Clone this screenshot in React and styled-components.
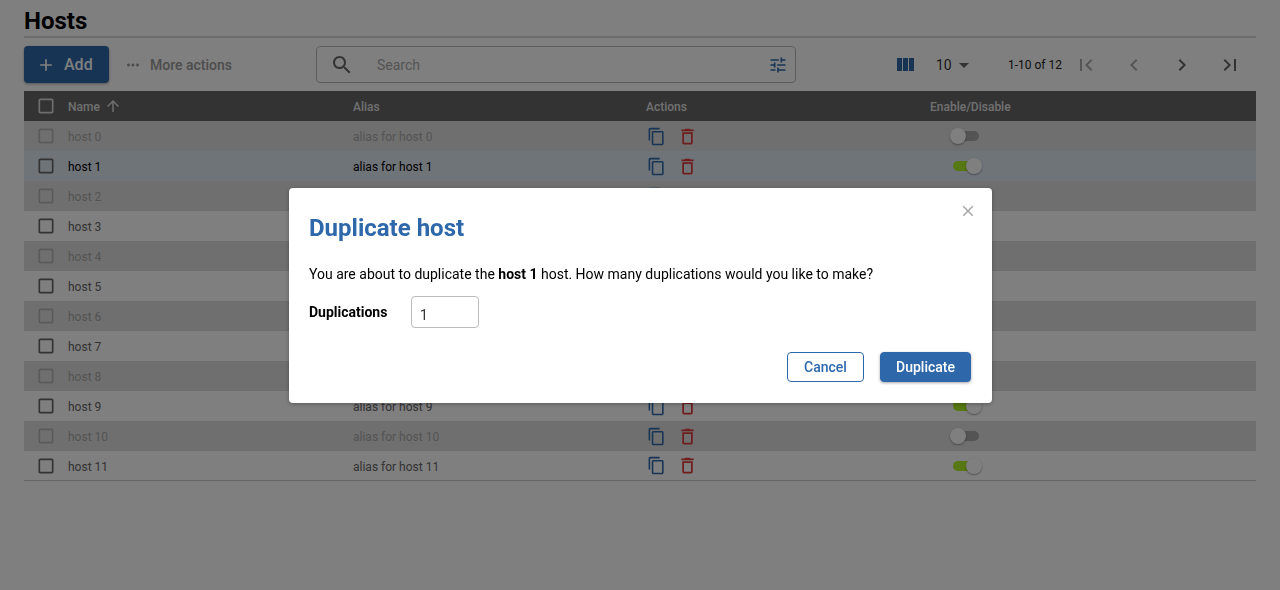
import React from "react";
import styled, { createGlobalStyle } from "styled-components";

const Global = createGlobalStyle`
  * { box-sizing: border-box; }
  html, body { margin: 0; padding: 0; height: 100%; background: #fff; font-family: Roboto, "Liberation Sans", sans-serif; color: #000; }
`;

const P = {
  copy: "M16 1H4c-1.1 0-2 .9-2 2v14h2V3h12V1zm3 4H8c-1.1 0-2 .9-2 2v14c0 1.1.9 2 2 2h11c1.1 0 2-.9 2-2V7c0-1.1-.9-2-2-2zm0 16H8V7h11v14z",
  del: "M6 19c0 1.1.9 2 2 2h8c1.1 0 2-.9 2-2V7H6v12zM8 9h8v10H8V9zm7.5-5l-1-1h-5l-1 1H5v2h14V4z",
  search: "M15.5 14h-.79l-.28-.27C15.41 12.59 16 11.11 16 9.5 16 5.91 13.09 3 9.5 3S3 5.91 3 9.5 5.91 16 9.5 16c1.61 0 3.09-.59 4.23-1.57l.27.28v.79l5 4.99L20.49 19l-4.99-5zm-6 0C7.01 14 5 11.99 5 9.5S7.01 5 9.5 5 14 7.01 14 9.5 11.99 14 9.5 14z",
  tune: "M3 17v2h6v-2H3zM3 5v2h10V5H3zm10 16v-2h8v-2h-8v-2h-2v6h2zM7 9v2H3v2h4v2h2V9H7zm14 4v-2H11v2h10zm-6-4h2V7h4V5h-4V3h-2v6z",
  columns: "M10 18h5V5h-5v13zm-6 0h5V5H4v13zM16 5v13h5V5h-5z",
  up: "M4 12l1.41 1.41L11 7.83V20h2V7.83l5.58 5.59L20 12l-8-8-8 8z",
  add: "M19 13h-6v6h-2v-6H5v-2h6V5h2v6h6v2z",
  more: "M6 10c-1.1 0-2 .9-2 2s.9 2 2 2 2-.9 2-2-.9-2-2-2zm12 0c-1.1 0-2 .9-2 2s.9 2 2 2 2-.9 2-2-.9-2-2-2zm-6 0c-1.1 0-2 .9-2 2s.9 2 2 2 2-.9 2-2-.9-2-2-2z",
  first: "M18.41 16.59L13.82 12l4.59-4.59L17 6l-6 6 6 6zM6 6h2v12H6z",
  prev: "M15.41 7.41L14 6l-6 6 6 6 1.41-1.41L10.83 12z",
  next: "M10 6L8.59 7.41 13.17 12l-4.58 4.59L10 18l6-6z",
  last: "M5.59 7.41L10.18 12l-4.59 4.59L7 18l6-6-6-6zM16 6h2v12h-2z",
  drop: "M7 10l5 5 5-5z",
  box: "M19 5v14H5V5h14m0-2H5c-1.1 0-2 .9-2 2v14c0 1.1.9 2 2 2h14c1.1 0 2-.9 2-2V5c0-1.1-.9-2-2-2z",
  close: "M19 6.41L17.59 5 12 10.59 6.41 5 5 6.41 10.59 12 5 17.59 6.41 19 12 13.41 17.59 19 19 17.59 13.41 12 19 6.41z",
};

const Icon = ({ d, size = 24, color = "currentColor" }) => (
  <svg width={size} height={size} viewBox="0 0 24 24" fill={color} style={{ display: "block", flex: "none" }}>
    <path d={d} />
  </svg>
);

const Page = styled.div`
  padding: 0 24px;
`;
const Title = styled.h1`
  margin: 0;
  height: 38px;
  padding-top: 8px;
  font-size: 24px;
  line-height: 26px;
  font-weight: 700;
  border-bottom: 2px solid #dadada;
`;
const Toolbar = styled.div`
  display: grid;
  grid-template-columns: 292px 480px 1fr;
  align-items: center;
  height: 37px;
  margin-top: 8px;
`;
const Actions = styled.div`
  display: flex;
  align-items: center;
`;
const AddButton = styled.div`
  display: flex;
  align-items: center;
  gap: 8px;
  width: 85px;
  height: 37px;
  padding-left: 12px;
  border-radius: 4px;
  background: #2e68ab;
  color: #fff;
  font-size: 16px;
  font-weight: 500;
  box-shadow: 0 1px 3px rgba(0, 0, 0, 0.35);
`;
const MoreButton = styled.div`
  display: flex;
  align-items: center;
  gap: 8px;
  margin-left: 15px;
  padding-top: 1px;
  color: #9a9a9a;
  font-size: 14px;
  font-weight: 500;
`;
const SearchBox = styled.div`
  display: flex;
  align-items: center;
  height: 37px;
  padding: 0 7px 0 13px;
  border: 1px solid #bbb;
  border-radius: 4px;
  color: #666;
`;
const SearchText = styled.span`
  flex: 1;
  margin-left: 23px;
  font-size: 14px;
  color: #a8a8a8;
`;
const Pager = styled.div`
  display: flex;
  align-items: center;
  padding-left: 97px;
  height: 37px;
`;
const PageSize = styled.div`
  display: flex;
  align-items: center;
  margin-left: 19px;
  width: 72px;
  font-size: 14px;
  color: #333;
`;
const Range = styled.span`
  width: 66px;
  font-size: 12px;
  color: #222;
`;
const PageButton = styled.div`
  width: 24px;
  margin-right: 24px;
  color: ${(p) => p.$color};
  &:last-child { margin-right: 0; }
`;
const Grid = styled.div`
  display: grid;
  grid-template-columns: 44px 285px 293px 284px 1fr;
  align-items: center;
  height: 30px;
  font-size: 12px;
`;
const Table = styled.div`
  margin-top: 8px;
`;
const Head = styled(Grid)`
  background: #666;
  color: #e0e0e0;
  font-weight: 500;
`;
const Row = styled(Grid)`
  background: ${(p) => (p.$hover ? "#dfe8f3" : p.$off ? "#dedede" : "#fff")};
  color: ${(p) => (p.$off ? "#a8a8a8" : p.$hover ? "#000" : "#666")};
  &:last-child { border-bottom: 1px solid #ccc; }
`;
const Cell = styled.div`
  padding-top: 2px;
`;
const Check = styled.div`
  padding-left: 12px;
  color: ${(p) => p.$color};
`;
const SortCell = styled.div`
  display: flex;
  align-items: center;
  gap: 4px;
`;
const RowActions = styled.div`
  display: flex;
  align-items: center;
  gap: 11px;
  margin-left: 1px;
`;
const Switch = styled.div`
  position: relative;
  width: 26px;
  height: 10px;
  margin-left: 23px;
  border-radius: 5px;
  background: ${(p) => (p.$on ? "#acee22" : "#a8a8a8")};
`;
const Thumb = styled.div`
  position: absolute;
  top: -3px;
  left: ${(p) => (p.$on ? "13px" : "-3px")};
  width: 16px;
  height: 16px;
  border-radius: 50%;
  background: #fff;
  box-shadow: 0 1px 2px rgba(0, 0, 0, 0.35);
`;
const Backdrop = styled.div`
  position: fixed;
  inset: 0;
  display: flex;
  align-items: center;
  justify-content: center;
  background: rgba(0, 0, 0, 0.5);
`;
const Modal = styled.div`
  position: relative;
  width: 703px;
  height: 215px;
  margin-left: 1px;
  padding: 24px 20px 0;
  border-radius: 4px;
  background: #fff;
  box-shadow: 0 1px 4px rgba(0, 0, 0, 0.3);
`;
const CloseButton = styled.div`
  position: absolute;
  top: 14px;
  right: 15px;
  color: #a5a5a5;
`;
const ModalTitle = styled.h2`
  margin: 0;
  font-size: 24px;
  line-height: 32px;
  font-weight: 700;
  color: #2e68ab;
`;
const Message = styled.p`
  margin: 20px 0 0;
  font-size: 14px;
  line-height: 20px;
  b { font-weight: 700; }
`;
const Field = styled.div`
  display: flex;
  align-items: center;
  margin-top: 12px;
`;
const FieldLabel = styled.label`
  width: 102px;
  font-size: 14px;
  font-weight: 700;
`;
const NumberBox = styled.div`
  width: 68px;
  height: 32px;
  padding: 10px 8px 0;
  border: 1px solid #bbb;
  border-radius: 4px;
  font-size: 14px;
  line-height: 17px;
  color: #333;
`;
const Buttons = styled.div`
  display: flex;
  justify-content: flex-end;
  gap: 16px;
  margin-top: 24px;
  margin-right: 1px;
`;
const ModalButton = styled.div`
  display: flex;
  align-items: center;
  justify-content: center;
  width: ${(p) => p.$w}px;
  height: 30px;
  border-radius: 4px;
  font-size: 14px;
  font-weight: 500;
  border: 1px solid #2e68ab;
  background: ${(p) => (p.$primary ? "#2e68ab" : "#fff")};
  color: ${(p) => (p.$primary ? "#fff" : "#2e68ab")};
  box-shadow: ${(p) => (p.$primary ? "0 1px 3px rgba(0,0,0,.35)" : "none")};
`;

const hosts = Array.from({ length: 12 }, (_, i) => i);

export default function App() {
  return (
    <>
      <Global />
      <Page>
        <Title>Hosts</Title>
        <Toolbar>
          <Actions>
            <AddButton><Icon d={P.add} size={20} /> Add</AddButton>
            <MoreButton><Icon d={P.more} size={18} color="#999" /> More actions</MoreButton>
          </Actions>
          <SearchBox>
            <Icon d={P.search} />
            <SearchText>Search</SearchText>
            <Icon d={P.tune} size={20} color="#2e68ab" />
          </SearchBox>
          <Pager>
            <Icon d={P.columns} color="#2e68ab" />
            <PageSize>10 <Icon d={P.drop} size={24} color="#666" /></PageSize>
            <Range>1-10 of 12</Range>
            <PageButton $color="#aaa"><Icon d={P.first} /></PageButton>
            <PageButton $color="#aaa"><Icon d={P.prev} /></PageButton>
            <PageButton $color="#666"><Icon d={P.next} /></PageButton>
            <PageButton $color="#666"><Icon d={P.last} /></PageButton>
          </Pager>
        </Toolbar>
        <Table>
          <Head>
            <Check $color="#ddd"><Icon d={P.box} size={20} /></Check>
            <SortCell><Cell>Name</Cell> <Icon d={P.up} size={18} /></SortCell>
            <Cell>Alias</Cell>
            <Cell>Actions</Cell>
            <Cell>Enable/Disable</Cell>
          </Head>
          {hosts.map((i) => {
            const off = i % 2 === 0;
            return (
              <Row key={i} $off={off} $hover={i === 1}>
                <Check $color={off ? "#b5b5b5" : "#666"}><Icon d={P.box} size={20} /></Check>
                <Cell>host {i}</Cell>
                <Cell>alias for host {i}</Cell>
                <RowActions>
                  <Icon d={P.copy} size={19} color="#2e68ab" />
                  <Icon d={P.del} size={21} color="#e03a3a" />
                </RowActions>
                <Switch $on={!off}><Thumb $on={!off} /></Switch>
              </Row>
            );
          })}
        </Table>
      </Page>
      <Backdrop>
        <Modal>
          <CloseButton><Icon d={P.close} size={18} /></CloseButton>
          <ModalTitle>Duplicate host</ModalTitle>
          <Message>You are about to duplicate the <b>host 1</b> host. How many duplications would you like to make?</Message>
          <Field>
            <FieldLabel>Duplications</FieldLabel>
            <NumberBox>1</NumberBox>
          </Field>
          <Buttons>
            <ModalButton $w={77}>Cancel</ModalButton>
            <ModalButton $w={91} $primary>Duplicate</ModalButton>
          </Buttons>
        </Modal>
      </Backdrop>
    </>
  );
}
